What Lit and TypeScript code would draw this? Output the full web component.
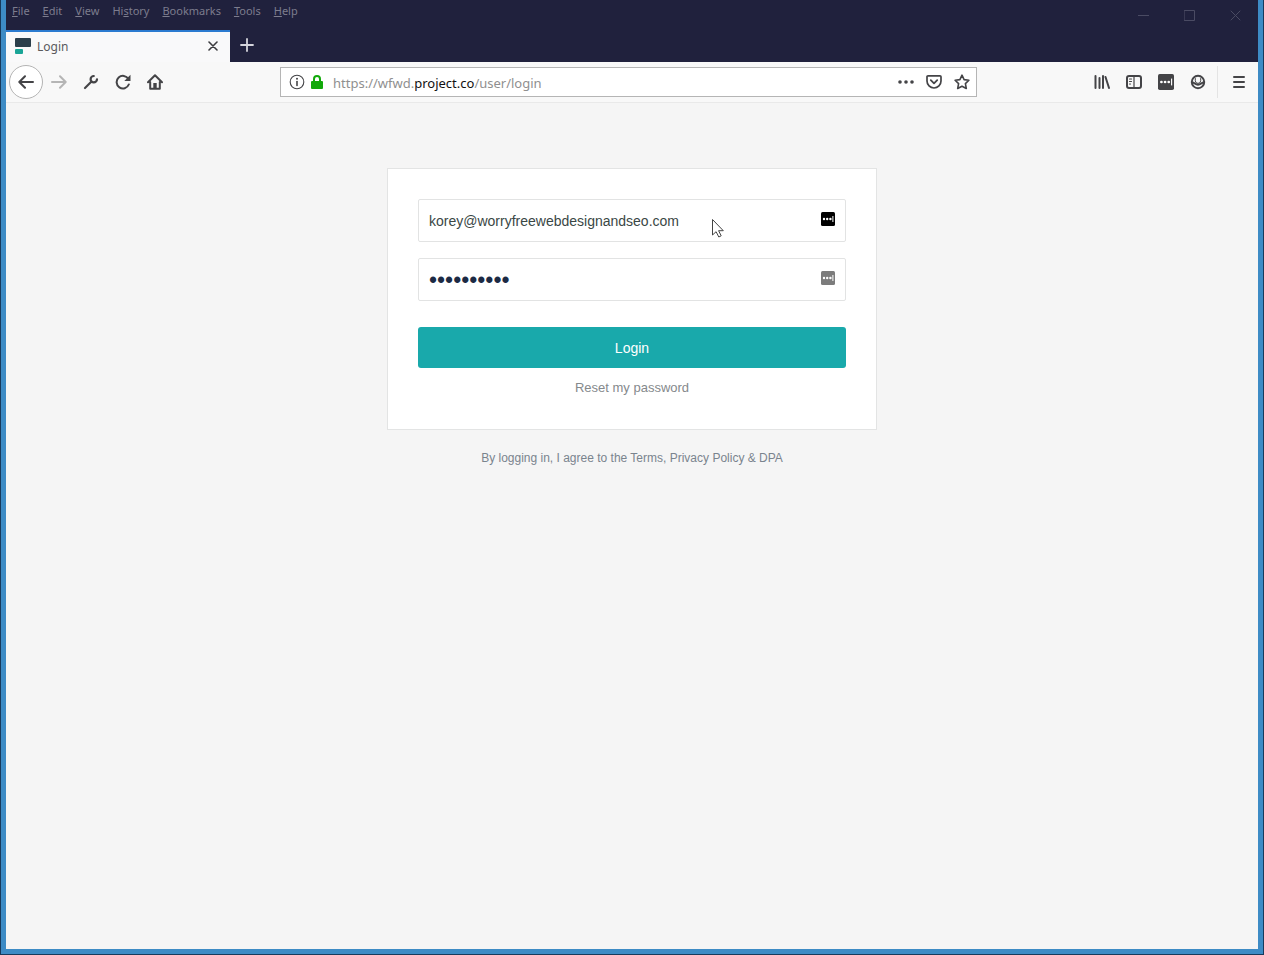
import { LitElement, html, css, svg } from "lit";
import { customElement } from "lit/decorators.js";

const dots = (w: string) => svg`
  <rect width="14" height="14" rx="1.5" fill="currentColor"/>
  <circle cx="3" cy="7" r="1.2" fill="${w}"/><circle cx="6.2" cy="7" r="1.2" fill="${w}"/>
  <circle cx="9.4" cy="7" r="1.2" fill="${w}"/><rect x="11.4" y="4" width="1" height="6" fill="${w}"/>`;

@customElement("browser-chrome")
export class BrowserChrome extends LitElement {
  static styles = css`
    :host { display: block; font-family: "Noto Sans", "Open Sans", sans-serif; }
    button { border: 0; padding: 0; background: none; color: inherit; font: inherit;
      display: flex; align-items: center; justify-content: center; }
    svg { display: block; fill: none; stroke: currentColor; stroke-width: 2;
      stroke-linecap: round; stroke-linejoin: round; }
    .title { display: flex; justify-content: space-between; height: 30px; background: #20213d; color: #7d7d8e; }
    .menu { display: flex; gap: 13px; padding: 3px 6px; font-size: 11px; line-height: 16px; }
    .menu button { align-items: flex-start; }
    .menu u { text-underline-offset: 1px; }
    .window { display: flex; color: #4a4b63; }
    .window button { width: 46px; height: 30px; }
    .window svg { stroke-width: 1; }
    .tabs { display: flex; height: 32px; background: #20213d; color: #d4d4dc; }
    .tab { display: flex; align-items: center; width: 224px; box-sizing: border-box;
      border-top: 2px solid #2b7bd0; background: #f9f9fa; color: #5a5a5d; padding: 0 8px 2px; font-size: 12px; }
    .name { flex: 1; padding-left: 6px; }
    .tab button { width: 18px; height: 24px; color: #3c3c3f; }
    .new { width: 34px; height: 30px; }
    .bar { display: flex; align-items: center; height: 40px; padding: 0 3px; background: #f8f8f8;
      border-bottom: 1px solid #e9e9e9; color: #444447; }
    .bar button { width: 32px; height: 34px; flex: none; }
    .bar .back { width: 34px; box-sizing: border-box; border: 1px solid #b4b4b4; border-radius: 50%; background: #fff; }
    .bar .forward { color: #b5b5b5; }
    .gap { flex: 1; }
    .address { flex: 0 1 697px; min-width: 0; display: flex; align-items: center; height: 30px;
      box-sizing: border-box; border: 1px solid #b5b5b5; background: #fff; padding: 0 0 0 6px; }
    .address .info, .address .lock { width: 20px; height: 28px; }
    .address .lock { color: #12a90a; }
    .address .act { width: 28px; height: 28px; }
    .url { flex: 1; padding-left: 6px; font-size: 13px; line-height: 28px; color: #8f8f8f; text-decoration: none;
      padding-top: 2px; white-space: nowrap; overflow: hidden; }
    .url b { color: #111; font-weight: 400; }
    .sep { width: 1px; height: 32px; margin: 0 5px 0 3px; background: #e4e4e4; }
  `;

  private menus = ["File", "Edit", "View", "History", "Bookmarks", "Tools", "Help"];
  private keys = [0, 0, 0, 2, 0, 0, 0];

  render() {
    return html`
      <div class="title">
        <nav class="menu">${this.menus.map((m, i) => {
          const k = this.keys[i];
          return html`<button><span>${m.slice(0, k)}<u>${m[k]}</u>${m.slice(k + 1)}</span></button>`;
        })}</nav>
        <div class="window">
          <button aria-label="Minimize"><svg width="11" height="11"><path d="M0 5.5h11"/></svg></button>
          <button aria-label="Maximize"><svg width="11" height="11"><path d="M.5 .5h10v10H.5z"/></svg></button>
          <button aria-label="Close window"><svg width="11" height="11"><path d="M1 1l9 9M10 1l-9 9"/></svg></button>
        </div>
      </div>
      <div class="tabs">
        <div class="tab">
          <svg width="17" height="16"><rect x="1" width="16" height="9" rx="1" fill="#2b3e4b" stroke="none"/><rect x="1" y="11" width="8" height="5" rx="1" fill="#1aa597" stroke="none"/></svg>
          <span class="name">Login</span>
          <button aria-label="Close tab"><svg width="10" height="10"><path d="M1 1l8 8M9 1l-8 8" stroke-width="1.6"/></svg></button>
        </div>
        <button class="new" aria-label="New tab"><svg width="14" height="14"><path d="M7 1v12M1 7h12" stroke-width="1.8"/></svg></button>
      </div>
      <div class="bar">
        <button class="back" aria-label="Back"><svg width="16" height="16"><path d="M15 8H1.5M7 2.2L1.3 8 7 13.8"/></svg></button>
        <button class="forward" aria-label="Forward"><svg width="16" height="16"><path d="M1 8h13.5M9 2.2L14.7 8 9 13.8"/></svg></button>
        <button aria-label="Developer tools"><svg width="16" height="16"><path d="M2 14l6.500-6.500" stroke-width="2.200"/><path d="M14 5.300A3.200 3.200 0 1 1 10.800 2" stroke-width="2.200"/></svg></button>
        <button aria-label="Reload"><svg width="16" height="16"><path d="M13.400 5A6.300 6.300 0 1 0 13.800 10.500"/><path d="M15.500 .8v6.200H9.300z" fill="currentColor" stroke="none"/></svg></button>
        <button aria-label="Home"><svg width="16" height="16"><path d="M1 8.300L8 1.300l7 7M3.200 8v6.800h9.600V8"/><path d="M6.300 14.500V9h3.400v5.500z" fill="currentColor" stroke="none"/></svg></button>
        <span class="gap"></span>
        <div class="address">
          <button class="info" aria-label="Site information"><svg width="16" height="16"><circle cx="8" cy="8" r="6.800" stroke-width="1.100"/><path d="M8 7.500v4" stroke-width="1.600"/><circle cx="8" cy="4.700" r="1" fill="currentColor" stroke="none"/></svg></button>
          <button class="lock" aria-label="Secure connection"><svg width="12" height="16"><rect y="7" width="12" height="8" rx="1" fill="currentColor" stroke="none"/><path d="M3 8V5a3 3 0 0 1 6 0v3"/></svg></button>
          <a class="url" href="#">https://wfwd.<b>project.co</b>/user/login</a>
          <button class="act" aria-label="Page actions"><svg width="16" height="16"><g fill="currentColor" stroke="none"><circle cx="2" cy="8" r="1.800"/><circle cx="8" cy="8" r="1.800"/><circle cx="14" cy="8" r="1.800"/></g></svg></button>
          <button class="act" aria-label="Save to Pocket"><svg width="16" height="16"><path d="M2 1.800h12a1 1 0 0 1 1 1V7A7 7 0 0 1 1 7V2.800a1 1 0 0 1 1-1z" stroke-width="1.700"/><path d="M4.800 6.200L8 9.300l3.200-3.100" stroke-width="1.800"/></svg></button>
          <button class="act" aria-label="Bookmark this page"><svg width="16" height="16"><path d="M8 1.200l2.100 4.400 4.800.6-3.500 3.400.9 4.900L8 12.200l-4.300 2.300.9-4.900L1.100 6.200l4.800-.6z" stroke-width="1.600"/></svg></button>
        </div>
        <span class="gap"></span>
        <button aria-label="Library"><svg width="16" height="16"><path d="M1.500 2v12M5.500 4v10M9 2v12M11.500 3l3.500 11"/></svg></button>
        <button aria-label="Sidebars"><svg width="16" height="16"><rect x="1" y="2" width="14" height="12" rx="2"/><path d="M8 2v12M3.500 5h2M3.500 7.500h2M3.500 10h1" stroke-width="1.200"/></svg></button>
        <button aria-label="Password manager"><svg width="16" height="16" viewBox="0 0 14 14"><g stroke="none">${dots("#fff")}</g></svg></button>
        <button aria-label="Account"><svg width="16" height="16"><circle cx="8" cy="8" r="6.200"/><path d="M5.300 4.500v2.200a2.700 2.700 0 0 0 5.400 0V4.500" stroke-width="1"/><path d="M2.500 8.500c2 0 2.700 2.300 5.500 2.300s3.500-2.300 5.500-2.300" stroke-width="2"/></svg></button>
        <span class="sep"></span>
        <button aria-label="Menu"><svg width="14" height="14"><path d="M2 2h10M2 7h10M2 12h10"/></svg></button>
      </div>`;
  }
}

@customElement("login-page")
export class LoginPage extends LitElement {
  static styles = css`
    :host { display: block; background: #f5f5f5; font-family: "Liberation Sans", Arial, sans-serif; padding: 65px 16px 16px; }
    .card { box-sizing: border-box; max-width: 490px; margin: 0 auto; padding: 30px; background: #fff;
      border: 1px solid #e3e4e4; }
    .field { position: relative; margin-bottom: 16px; }
    input { display: block; box-sizing: border-box; width: 100%; height: 43px; border: 1px solid #e2e3e3;
      border-radius: 2px; padding: 0 40px 0 10px; background: #fff; color: #3a4745; font: 14px "Liberation Sans", Arial, sans-serif; outline: 0; }
    input.secret { font-size: 23px; padding-top: 2px; color: #1c2a44; }
    .key { position: absolute; right: 11px; top: 13px; color: #000; }
    .key.dim { color: #7c7c7c; }
    .pointer { position: absolute; left: 294px; top: 20px; }
    .login { display: block; width: 100%; height: 41px; margin-top: 26px; border: 0; border-radius: 3px;
      background: #19a9ab; color: #fff; font: 14px "Liberation Sans", Arial, sans-serif; padding: 0; }
    .reset { display: block; margin-top: 12px; text-align: center; font-size: 13px; line-height: 16px;
      color: #85898c; text-decoration: none; margin-bottom: 3px; }
    .legal { margin: 20px 0 0; text-align: center; font-size: 12px; line-height: 16px; color: #7a848e; }
    .legal a { color: inherit; text-decoration: none; }
  `;

  render() {
    return html`
      <form class="card" @submit=${(e: Event) => e.preventDefault()}>
        <div class="field">
          <input type="email" aria-label="Email" value="korey@worryfreewebdesignandseo.com">
          <svg class="key" width="14" height="14">${dots("#fff")}</svg>
          <svg class="pointer" width="12" height="19"><path d="M.5 .5v15.500l3.600-3.300 2.700 5.300 2.400-1.200-2.600-5.100h4.700z" fill="#fff" stroke="#444"/></svg>
        </div>
        <div class="field">
          <input class="secret" type="password" aria-label="Password" value="0123456789">
          <svg class="key dim" width="14" height="14">${dots("#fff")}</svg>
        </div>
        <button class="login">Login</button>
        <a class="reset" href="#">Reset my password</a>
      </form>
      <p class="legal">By logging in, I agree to the <a href="#">Terms</a>, <a href="#">Privacy Policy</a> &amp; <a href="#">DPA</a></p>`;
  }
}

@customElement("app-root")
export class AppRoot extends LitElement {
  static styles = css`
    :host { display: flex; flex-direction: column; box-sizing: border-box; min-height: 100vh;
      padding: 0 1px 1px; background: #173a5c; }
    .frame { flex: 1; display: flex; flex-direction: column; border: 5px solid #3d8bc5; border-top: 0; }
    login-page { flex: 1; }
  `;

  render() {
    return html`<div class="frame"><browser-chrome></browser-chrome><login-page></login-page></div>`;
  }
}
